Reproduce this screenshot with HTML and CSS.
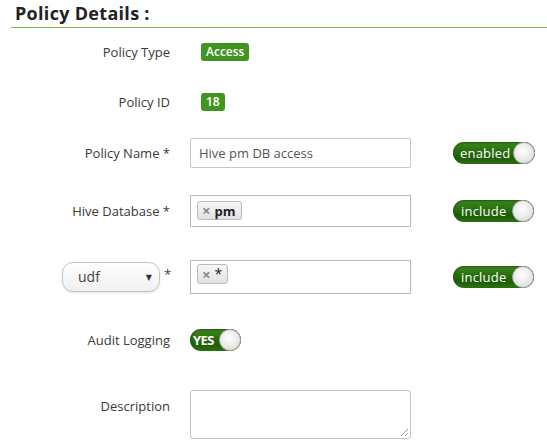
FILE: index.html
```html
<!DOCTYPE html>
<html>
<head>
<meta charset="utf-8">
<link rel="stylesheet" href="styles.css">
</head>
<body>
<div class="page">
  <h3 class="title">Policy Details :</h3>
  <div class="form">
    <div class="row r1">
      <div class="label">Policy Type</div>
      <div class="ctrl"><span class="badge">Access</span></div>
    </div>
    <div class="row r2">
      <div class="label">Policy ID</div>
      <div class="ctrl"><span class="badge">18</span></div>
    </div>
    <div class="row r3">
      <div class="label">Policy Name *</div>
      <div class="ctrl"><div class="input text">Hive pm DB access</div></div>
      <div class="tog-col"><span class="toggle wide"><span class="tog-text">enabled</span><span class="knob"></span></span></div>
    </div>
    <div class="row r4">
      <div class="label">Hive Database *</div>
      <div class="ctrl"><div class="input tags h32"><span class="tag"><span class="x">×</span><b>pm</b></span></div></div>
      <div class="tog-col"><span class="toggle wide inc"><span class="tog-text">include</span><span class="knob"></span></span></div>
    </div>
    <div class="row r5">
      <div class="label sel-label"><span class="select"><span>udf</span><span class="caret">▼</span></span><span class="star">*</span></div>
      <div class="ctrl"><div class="input tags h34"><span class="tag star-tag"><span class="x">×</span><span class="ast">*</span></span></div></div>
      <div class="tog-col"><span class="toggle wide inc"><span class="tog-text">include</span><span class="knob"></span></span></div>
    </div>
    <div class="row r6">
      <div class="label">Audit Logging</div>
      <div class="ctrl"><span class="toggle yes"><span class="tog-text">YES</span><span class="knob"></span></span></div>
    </div>
    <div class="row r7">
      <div class="label top">Description</div>
      <div class="ctrl"><div class="textarea"><span class="grip"></span></div></div>
    </div>
  </div>
</div>
</body>
</html>
```
FILE: styles.css
```css
html, body {
  margin: 0;
  padding: 0;
  background: #fff;
}
body {
  font-family: "Open Sans", "DejaVu Sans", sans-serif;
  color: #3a3a3a;
  font-size: 13px;
}
.page {
  width: 547px;
  height: 444px;
  overflow: hidden;
}
.title {
  margin: 0 0 0 11px;
  padding: 2px 0 0 4px;
  height: 25px;
  font-size: 18px;
  font-weight: 700;
  letter-spacing: 0.3px;
  color: #222;
  line-height: 22px;
  border-bottom: 1px solid #7ab648;
}
.row {
  display: flex;
  align-items: center;
}
.label {
  width: 170px;
  text-align: right;
  flex: none;
  color: #3a3a3a;
  line-height: 18px;
}
.ctrl {
  margin-left: 20px;
  width: 221px;
  flex: none;
  display: flex;
  align-items: center;
}
.tog-col {
  margin-left: 42px;
  flex: none;
}
.r1 { margin-top: 15px; height: 18px; }
.r2 { margin-top: 32px; height: 18px; }
.r3 { margin-top: 27px; height: 30px; }
.r4 { margin-top: 27px; height: 32px; }
.r5 { margin-top: 33px; height: 34px; }
.r6 { margin-top: 35px; height: 22px; }
.r7 { margin-top: 39px; height: 49px; align-items: flex-start; }
.label.top { padding-top: 7px; }

.badge {
  margin-left: 11px;
  background: #3f9520;
  color: #fff;
  font-weight: 600;
  font-size: 12px;
  line-height: 18px;
  height: 18px;
  padding: 0 5px;
  border-radius: 3px;
}
.input {
  box-sizing: border-box;
  width: 221px;
  border: 1px solid #c8c8c8;
  background: #fff;
  border-radius: 2px;
}
.input.text {
  height: 30px;
  line-height: 28px;
  padding-left: 8px;
  color: #555;
  font-size: 13px;
}
.input.tags {
  display: flex;
  align-items: flex-start;
  padding: 5px 6px;
  border-radius: 0;
  border-color: #b8b8b8;
}
.h32 { height: 32px; }
.h34 { height: 34px; padding-top: 3px !important; }
.tag {
  display: inline-flex;
  align-items: center;
  box-sizing: border-box;
  height: 19px;
  border: 1px solid #bbb;
  border-radius: 3px;
  background: linear-gradient(#f6f6f6, #e2e2e2);
  padding: 0 5px 0 4px;
  font-size: 13px;
  color: #222;
}
.tag .x {
  color: #888;
  font-weight: 700;
  font-size: 15px;
  line-height: 15px;
  margin-right: 4px;
}
.tag b { font-weight: 700; }
.star-tag { height: 20px; }
.star-tag .ast { font-size: 14px; line-height: 14px; align-self: flex-start; margin-top: 2px; }

.toggle {
  position: relative;
  display: inline-flex;
  align-items: center;
  box-sizing: border-box;
  height: 22px;
  border-radius: 11px;
  background: linear-gradient(#3b8a1b, #1c5c06 70%, #2a7310);
  box-shadow: inset 0 1px 2px rgba(0,0,0,0.4);
  color: #fff;
}
.toggle.wide { width: 82px; }
.toggle.inc { width: 81px; }
.toggle.yes { width: 51px; }
.tog-text {
  font-size: 13px;
  padding-left: 7px;
  letter-spacing: 0.2px;
}
.toggle.inc .tog-text { padding-left: 8px; }
.toggle.yes .tog-text {
  font-weight: 700;
  font-size: 13px;
  padding-left: 3px;
  letter-spacing: -0.6px;
}
.knob {
  position: absolute;
  right: 0;
  top: 0;
  width: 22px;
  height: 22px;
  box-sizing: border-box;
  border-radius: 50%;
  border: 1px solid #aaa;
  background: radial-gradient(circle at 45% 40%, #fff, #e6e6e6 60%, #cfcfcf);
}

.sel-label {
  display: flex;
  align-items: center;
  justify-content: flex-end;
}
.select {
  box-sizing: border-box;
  width: 99px;
  height: 30px;
  margin-left: 62px;
  border: 1px solid #c4c4c4;
  border-radius: 11px;
  background: linear-gradient(#fff, #f0f0f0);
  box-shadow: 0 1px 2px rgba(0,0,0,0.12);
  display: flex;
  align-items: center;
  justify-content: space-between;
  padding: 0 7px 0 15px;
  font-size: 14px;
  color: #444;
  text-align: left;
}
.caret { font-size: 8px; color: #333; }
.star {
  margin-left: 4px;
  width: 6px;
  align-self: flex-start;
  margin-top: 3px;
  font-size: 13px;
}
.textarea {
  position: relative;
  box-sizing: border-box;
  width: 221px;
  height: 49px;
  border: 1px solid #c4c4c4;
  border-radius: 3px;
  background: #fff;
}
.grip {
  position: absolute;
  right: 2px;
  bottom: 2px;
  width: 7px;
  height: 7px;
  background: linear-gradient(135deg, transparent 45%, #999 45%, #999 55%, transparent 55%, transparent 72%, #999 72%, #999 82%, transparent 82%);
}
```
